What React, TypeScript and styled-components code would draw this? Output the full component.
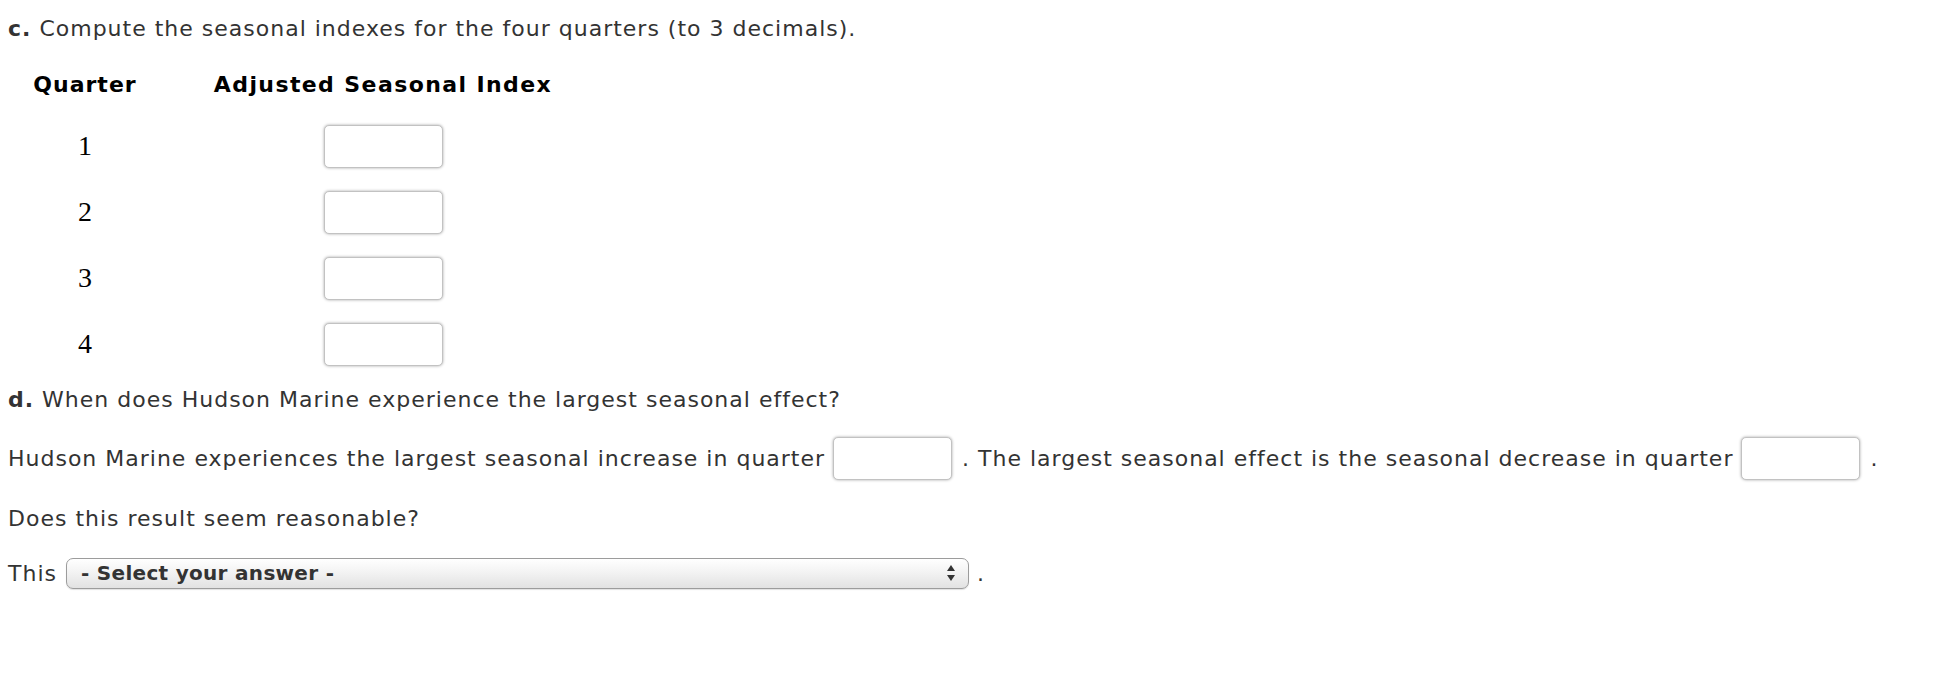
import React from 'react';
import styled, { createGlobalStyle } from 'styled-components';

const GlobalStyle = createGlobalStyle`
  body {
    margin: 0;
    background: #fff;
    font-family: "DejaVu Sans", Verdana, sans-serif;
    color: #333;
  }
`;

const Page = styled.div`
  padding-left: 8px;
  width: 1930px;
`;

const Line = styled.div<{ h: number }>`
  display: flex;
  align-items: center;
  height: ${(props) => props.h}px;
  font-size: 22px;
  letter-spacing: 1px;
  white-space: pre;
`;

const Part = styled.b`
  font-weight: bold;
`;

const Table = styled.div`
  display: grid;
  grid-template-columns: 154px 442px;
  grid-auto-rows: 66px;
  grid-template-rows: 57px;
  justify-items: center;
  align-items: center;
`;

const HeadCell = styled.div<{ spacing: number }>`
  font-weight: bold;
  font-size: 22px;
  letter-spacing: ${(props) => props.spacing}px;
  color: #000;
`;

const Num = styled.div`
  font-family: "Liberation Serif", "DejaVu Serif", serif;
  font-size: 28px;
  color: #000;
`;

const Field = styled.span<{ ml?: number; mr?: number }>`
  display: inline-block;
  box-sizing: border-box;
  width: 119px;
  height: 43px;
  border: 1px solid #c2c2c2;
  border-radius: 5px;
  background: #fff;
  box-shadow: 0 0 3px rgba(0, 0, 0, 0.35);
  margin-left: ${(props) => props.ml ?? 0}px;
  margin-right: ${(props) => props.mr ?? 0}px;
`;

const Select = styled.div`
  box-sizing: border-box;
  width: 903px;
  height: 31px;
  margin: 0 8px 0 9px;
  display: flex;
  align-items: center;
  justify-content: space-between;
  padding: 0 12px 0 14px;
  border: 1px solid #9c9c9c;
  border-radius: 7px;
  background: linear-gradient(#ffffff, #f3f3f3 45%, #e2e2e2);
  box-shadow: 0 1px 1px rgba(0, 0, 0, 0.12);
  font-weight: bold;
  font-size: 20px;
  letter-spacing: 0.3px;
  color: #333;
`;

const Arrows = () => (
  <svg width="10" height="18" viewBox="0 0 10 18">
    <path d="M5 1 L9 7 L1 7 Z" fill="#333" />
    <path d="M5 17 L9 11 L1 11 Z" fill="#333" />
  </svg>
);

const quarters = [1, 2, 3, 4];

export default function App() {
  return (
    <Page>
      <GlobalStyle />
      <Line h={56}>
        <Part>c.</Part> Compute the seasonal indexes for the four quarters (to 3 decimals).
      </Line>
      <Table>
        <HeadCell spacing={1}>Quarter</HeadCell>
        <HeadCell spacing={1.4}>Adjusted Seasonal Index</HeadCell>
        {quarters.map((q) => (
          <React.Fragment key={q}>
            <Num>{q}</Num>
            <Field />
          </React.Fragment>
        ))}
      </Table>
      <Line h={44}>
        <Part>d.</Part> When does Hudson Marine experience the largest seasonal effect?
      </Line>
      <Line h={74}>
        Hudson Marine experiences the largest seasonal increase in quarter
        <Field ml={8} mr={10} />
        . The largest seasonal effect is the seasonal decrease in quarter
        <Field ml={8} mr={10} />
        .
      </Line>
      <Line h={46}>Does this result seem reasonable?</Line>
      <Line h={64}>
        This
        <Select>
          <span>- Select your answer -</span>
          <Arrows />
        </Select>
        .
      </Line>
    </Page>
  );
}
